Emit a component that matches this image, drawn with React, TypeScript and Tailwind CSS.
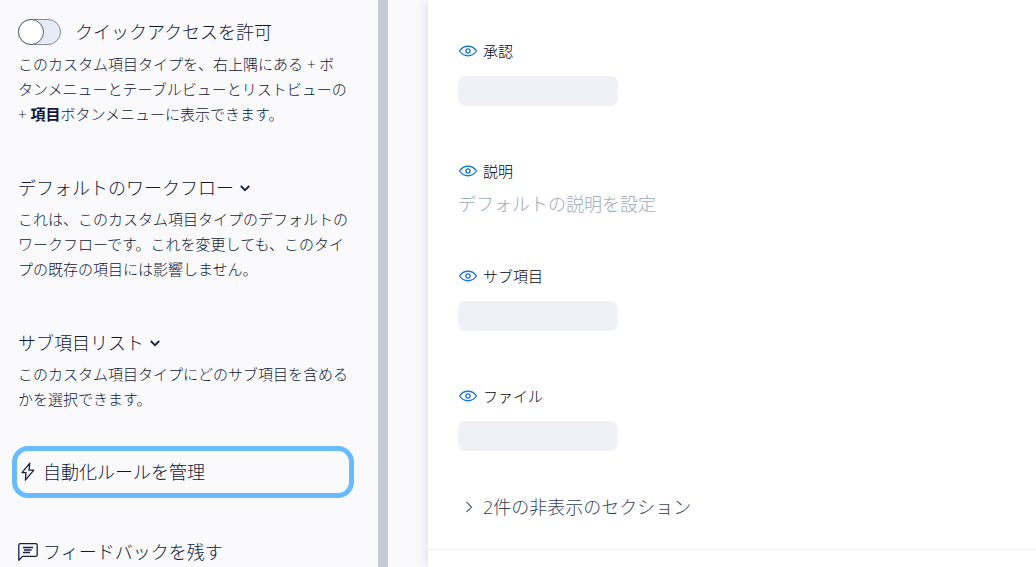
import { useState, type ReactNode } from "react";

const FIELDS = [
  { id: "approval", label: "承認" },
  { id: "description", label: "説明", placeholder: "デフォルトの説明を設定" },
  { id: "subitems", label: "サブ項目" },
  { id: "files", label: "ファイル" },
];

function EyeIcon() {
  return (
    <svg width="20" height="12" viewBox="0 0 20 12" fill="none" stroke="#1878cf" strokeWidth="1.4">
      <path d="M1.6 6C3.5 3 6.5 1.3 10 1.3S16.5 3 18.4 6C16.5 9 13.5 10.7 10 10.7S3.5 9 1.6 6Z" strokeLinejoin="round" />
      <circle cx="10" cy="6" r="2.1" />
    </svg>
  );
}

function BoltIcon() {
  return (
    <svg width="16" height="20" viewBox="0 0 16 20" fill="none" stroke="#172046" strokeWidth="1.3" strokeLinejoin="round">
      <path d="M9.8 1.2 2 10.600h4L5.400 18.200 13.800 8.200H9L9.800 1.200Z" />
    </svg>
  );
}

function FeedbackIcon() {
  return (
    <svg width="20" height="20" viewBox="0 0 20 20" fill="none" stroke="#172046" strokeWidth="1.3">
      <path d="M.8 18.3V3.2C.8 2.2 1.5 1.6 2.4 1.6H17.6C18.5 1.6 19.2 2.2 19.2 3.2V12.8C19.2 13.8 18.5 14.4 17.6 14.4H4.6L.8 18.3Z" strokeLinejoin="round" />
      <path d="M5 5.500H15M6 8H13.500M5 10.500H12" />
    </svg>
  );
}

function ChevronDown() {
  return (
    <svg width="10" height="8" viewBox="0 0 10 8" fill="none" stroke="#172046" strokeWidth="1.8">
      <path d="M.8 1 5 5.200 9.200 1" />
    </svg>
  );
}

function SettingSection({ title, children }: { title: string; children: ReactNode }) {
  return (
    <section className="mb-[49px]">
      <button className="flex items-center gap-1.5 text-lg leading-[25px]">
        {title}
        <ChevronDown />
      </button>
      <p className="mt-1.5 text-[15px] leading-[25px]">{children}</p>
    </section>
  );
}

export default function App() {
  const [quickAccess, setQuickAccess] = useState(false);

  return (
    <div className="flex h-screen overflow-hidden bg-[#fafafd] font-['Open_Sans','Noto_Sans_CJK_JP',sans-serif] font-light text-[#10183a]">
      {/* Settings sidebar */}
      <aside className="w-[388px] shrink-0 overflow-hidden border-r-[10px] border-[#c5c9d1] pt-[19px] pr-[30px] pl-[18px]">
        <section className="mb-[49px]">
          <label className="flex h-[26px] cursor-pointer items-center text-lg">
            <input
              type="checkbox"
              role="switch"
              className="peer sr-only"
              checked={quickAccess}
              onChange={(e) => setQuickAccess(e.target.checked)}
            />
            <span className="mr-3.5 flex h-[26px] w-[43px] items-center rounded-full border border-[#7f8ba5] bg-[#e6ecf5] peer-checked:justify-end peer-checked:bg-[#1878cf]">
              <span className="-mx-px size-[26px] shrink-0 rounded-full border border-[#53617f] bg-white" />
            </span>
            クイックアクセスを許可
          </label>
          <p className="mt-[7px] text-[15px] leading-[25px]">
            このカスタム項目タイプを、右上隅にある + ボタンメニューとテーブルビューとリストビューの + <b className="font-bold">項目</b>ボタンメニューに表示できます。
          </p>
        </section>

        <SettingSection title="デフォルトのワークフロー">
          これは、このカスタム項目タイプのデフォルトのワークフローです。これを変更しても、このタイプの既存の項目には影響しません。
        </SettingSection>
        <SettingSection title="サブ項目リスト">
          このカスタム項目タイプにどのサブ項目を含めるかを選択できます。
        </SettingSection>

        <div className="-mx-1.5 -mt-[15px]">
          <button className="flex h-[52px] w-full items-center gap-[7px] rounded-2xl border-[5px] border-[#68bbff] pl-[3px] text-lg">
            <BoltIcon />
            自動化ルールを管理
          </button>
        </div>
        <button className="mt-10 flex items-center gap-[5px] text-lg">
          <FeedbackIcon />
          フィードバックを残す
        </button>
      </aside>

      {/* Layout preview */}
      <main className="ml-10 min-w-0 flex-1 bg-white pt-[41px] shadow-[0_0_12px_rgba(30,45,60,0.16)]">
        <div className="px-[30px]">
          {FIELDS.map((field) => (
            <div key={field.id} className={field.placeholder ? "h-[105px]" : "h-[120px]"}>
              <label htmlFor={field.id} className="flex h-5 items-center gap-[5px] text-[15px] text-[#000412]">
                <EyeIcon />
                {field.label}
              </label>
              {field.placeholder ? (
                <input
                  id={field.id}
                  placeholder={field.placeholder}
                  className="mt-2.5 h-[25px] w-full text-lg outline-none placeholder:text-[#9ca8c0]"
                />
              ) : (
                <input id={field.id} readOnly className="mt-[15px] block h-[30px] w-40 rounded-lg bg-[#f0f1f6]" />
              )}
            </div>
          ))}
        </div>
        <div className="border-b border-[#eeeff2] px-[30px] pb-[30px]">
          <button className="-mt-3 flex h-[25px] items-center text-lg text-[#36425f]">
            <svg width="25" height="12" viewBox="0 0 25 12" fill="none" stroke="#5c6780" strokeWidth="1.2">
              <path d="M8.500 1 13.500 6 8.500 11" />
            </svg>
            2件の非表示のセクション
          </button>
        </div>
      </main>
    </div>
  );
}
